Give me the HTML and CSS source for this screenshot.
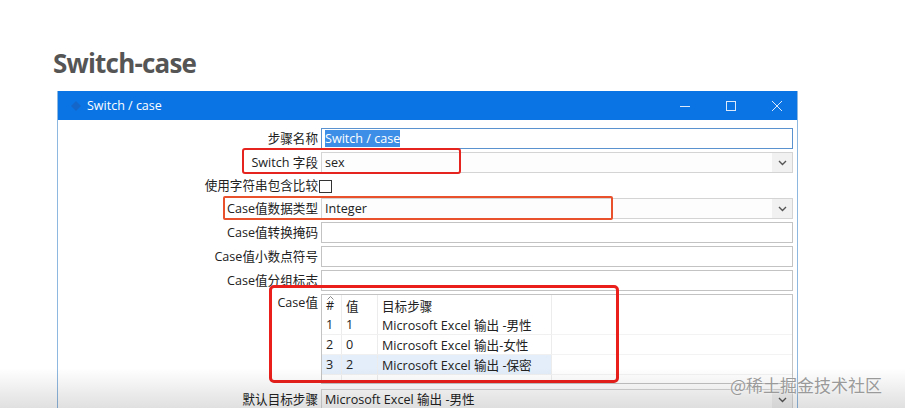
FILE: index.html
```html
<!DOCTYPE html>
<html>
<head>
<meta charset="utf-8" />
<title>Switch-case</title>
<link rel="stylesheet" href="styles.css">
</head>
<body>
<h1 class="page_title">Switch-case</h1>

<div class="window">
    <!-- barre de titre -->
    <div class="titlebar">
        <svg class="app_icon" width="12" height="12" viewBox="0 0 12 12"><path d="M1 6 L6 1 L11 6 L6 11 Z" fill="#1b5fb8" opacity="0.6"/></svg>
        <span class="win_title">Switch / case</span>
        <div class="controls">
            <svg width="12" height="12" viewBox="0 0 12 12"><path d="M1 6.5 H11" stroke="#dbe9fb" stroke-width="1"/></svg>
            <svg width="12" height="12" viewBox="0 0 12 12"><rect x="1.5" y="1.5" width="9" height="9" fill="none" stroke="#dbe9fb" stroke-width="1"/></svg>
            <svg width="12" height="12" viewBox="0 0 12 12"><path d="M1 1 L11 11 M11 1 L1 11" stroke="#dbe9fb" stroke-width="1"/></svg>
        </div>
    </div>

    <div class="form">
        <label>步骤名称</label>
        <div class="field focus"><span class="selected">Switch / case</span></div>

        <label>Switch 字段</label>
        <div class="field select">sex<span class="arrow"><svg width="9" height="6" viewBox="0 0 9 6"><path d="M1 1 L4.5 4.5 L8 1" fill="none" stroke="#555" stroke-width="1.4"/></svg></span></div>

        <label class="short">使用字符串包含比较</label>
        <div class="short"><span class="checkbox"></span></div>

        <label>Case值数据类型</label>
        <div class="field select">Integer<span class="arrow"><svg width="9" height="6" viewBox="0 0 9 6"><path d="M1 1 L4.5 4.5 L8 1" fill="none" stroke="#555" stroke-width="1.4"/></svg></span></div>

        <label>Case值转换掩码</label>
        <div class="field"></div>

        <label>Case值小数点符号</label>
        <div class="field"></div>

        <label>Case值分组标志</label>
        <div class="field"></div>

        <label class="top">Case值</label>
        <div class="table_box">
            <table class="cases">
                <tr class="head">
                    <td class="c_num"><svg class="caret" width="7" height="4" viewBox="0 0 7 4"><path d="M0.5 3.5 L3.5 0.5 L6.5 3.5" fill="none" stroke="#777" stroke-width="0.9"/></svg>#</td>
                    <td class="c_val">值</td>
                    <td class="c_target">目标步骤</td>
                    <td class="c_rest"></td>
                </tr>
                <tr>
                    <td class="c_num">1</td>
                    <td class="c_val">1</td>
                    <td class="c_target">Microsoft Excel 输出 -男性</td>
                    <td class="c_rest"></td>
                </tr>
                <tr>
                    <td class="c_num">2</td>
                    <td class="c_val">0</td>
                    <td class="c_target">Microsoft Excel 输出-女性</td>
                    <td class="c_rest"></td>
                </tr>
                <tr class="current">
                    <td class="c_num">3</td>
                    <td class="c_val">2</td>
                    <td class="c_target">Microsoft Excel 输出 -保密</td>
                    <td class="c_rest"></td>
                </tr>
                <tr class="filler">
                    <td class="c_num"></td>
                    <td class="c_val"></td>
                    <td class="c_target"></td>
                    <td class="c_rest"></td>
                </tr>
            </table>
        </div>

        <label class="after_table">默认目标步骤</label>
        <div class="field select after_table">Microsoft Excel 输出 -男性<span class="arrow"><svg width="9" height="6" viewBox="0 0 9 6"><path d="M1 1 L4.5 4.5 L8 1" fill="none" stroke="#555" stroke-width="1.4"/></svg></span></div>
    </div>

    <!-- annotations rouges -->
    <div class="mark mark_switch"></div>
    <div class="mark mark_type"></div>
    <div class="mark mark_case"></div>
</div>

<div class="watermark">@稀土掘金技术社区</div>
<div class="shade"></div>
</body>
</html>
```

FILE: styles.css
```css
body {
    margin: 0;
    padding: 0;
    background: #fff;
    font-family: "Open Sans", "Noto Sans CJK SC", sans-serif;
    overflow: hidden;
    width: 905px;
    height: 408px;
    position: relative;
}

.page_title {
    margin: 0;
    height: 91px;
    box-sizing: border-box;
    padding: 45px 0 0 53px;
    font-size: 26px;
    line-height: 36px;
    font-weight: 700;
    color: #555;
    letter-spacing: -0.8px;
}

.window {
    position: relative;
    margin-left: 57px;
    width: 741px;
    height: 330px;
    box-sizing: border-box;
    border-left: 1px solid #8fb8e0;
    border-right: 1px solid #8fb8e0;
    background: #fff;
}

.titlebar {
    height: 29px;
    background: #0a74e4;
    display: flex;
    align-items: center;
    color: #fff;
    font-size: 12.5px;
}

.app_icon {
    margin-left: 12px;
}

.win_title {
    margin-left: 5px;
}

.controls {
    margin-left: auto;
    display: flex;
    gap: 34px;
    margin-right: 14px;
}

.form {
    display: grid;
    grid-template-columns: 260px 472px;
    row-gap: 3px;
    column-gap: 3px;
    padding-top: 8px;
    font-size: 12.6px;
    color: #222;
}

.form label {
    text-align: right;
    line-height: 21px;
    height: 21px;
    white-space: nowrap;
}

.form label.top {
    line-height: 17px;
}

.form .short {
    height: 19px;
    line-height: 19px;
}

.form .after_table {
    margin-top: 2px;
}

.field {
    box-sizing: border-box;
    border: 1px solid #c3c3c3;
    background: #fff;
    height: 21px;
    line-height: 19px;
    padding-left: 3px;
    position: relative;
    white-space: nowrap;
}

.field.focus {
    border-color: #5a92cf;
}

.selected {
    background: #3d8ee6;
    color: #fff;
}

.field.select {
    border-color: #d4d4d4;
    background: #fdfdfd;
}

.arrow {
    position: absolute;
    right: 0;
    top: 0;
    bottom: 0;
    width: 20px;
    background: #f1f1f1;
    display: flex;
    align-items: center;
    justify-content: center;
}

.checkbox {
    display: block;
    width: 11px;
    height: 11px;
    border: 1px solid #333;
    background: #fff;
    margin: 4px 0 0 -2px;
}

.table_box {
    height: 90px;
    box-sizing: border-box;
    border: 1px solid #c3c3c3;
    overflow: hidden;
}

.cases {
    border-collapse: collapse;
    width: 100%;
    font-size: 12.6px;
}

.cases td {
    height: 19px;
    padding: 0 0 0 4px;
    border-left: 1px solid #ececec;
    border-bottom: 1px solid #f0f0f0;
    white-space: nowrap;
}

.cases tr.head td {
    height: 20px;
    border-bottom: none;
}

.cases td.c_num {
    width: 15px;
    border-left: none;
    position: relative;
}

.cases td.c_val { width: 31px; }
.cases td.c_target { width: 169px; }

.cases td.c_rest {
    border-bottom-color: #f3f3f3;
}

.cases tr.current td.c_num,
.cases tr.current td.c_val,
.cases tr.current td.c_target {
    background: #e3eefa;
}

.cases tr.filler td {
    border-bottom: none;
    height: 12px;
}

.caret {
    position: absolute;
    left: 5px;
    top: 1px;
}

.mark {
    position: absolute;
    box-sizing: border-box;
    pointer-events: none;
}

.mark_switch {
    left: 184px;
    top: 57px;
    width: 219px;
    height: 26px;
    border: 2px solid #e6241f;
    border-radius: 3px;
}

.mark_type {
    left: 165px;
    top: 105px;
    width: 390px;
    height: 24px;
    border: 2px solid #e8512c;
    border-radius: 2px;
}

.mark_case {
    left: 211px;
    top: 194px;
    width: 350px;
    height: 98px;
    border: 3px solid #ea1f1b;
    border-radius: 5px;
}

.watermark {
    position: absolute;
    left: 730px;
    top: 372px;
    font-size: 17px;
    color: #9a9a9a;
    text-shadow: 0 0 2px #fff;
    font-family: "Noto Sans CJK SC", sans-serif;
    z-index: 2;
}

.shade {
    position: absolute;
    left: 0;
    right: 0;
    bottom: 0;
    height: 40px;
    background: linear-gradient(to bottom, rgba(0, 0, 0, 0), rgba(0, 0, 0, 0.12));
    pointer-events: none;
    z-index: 1;
}
```
